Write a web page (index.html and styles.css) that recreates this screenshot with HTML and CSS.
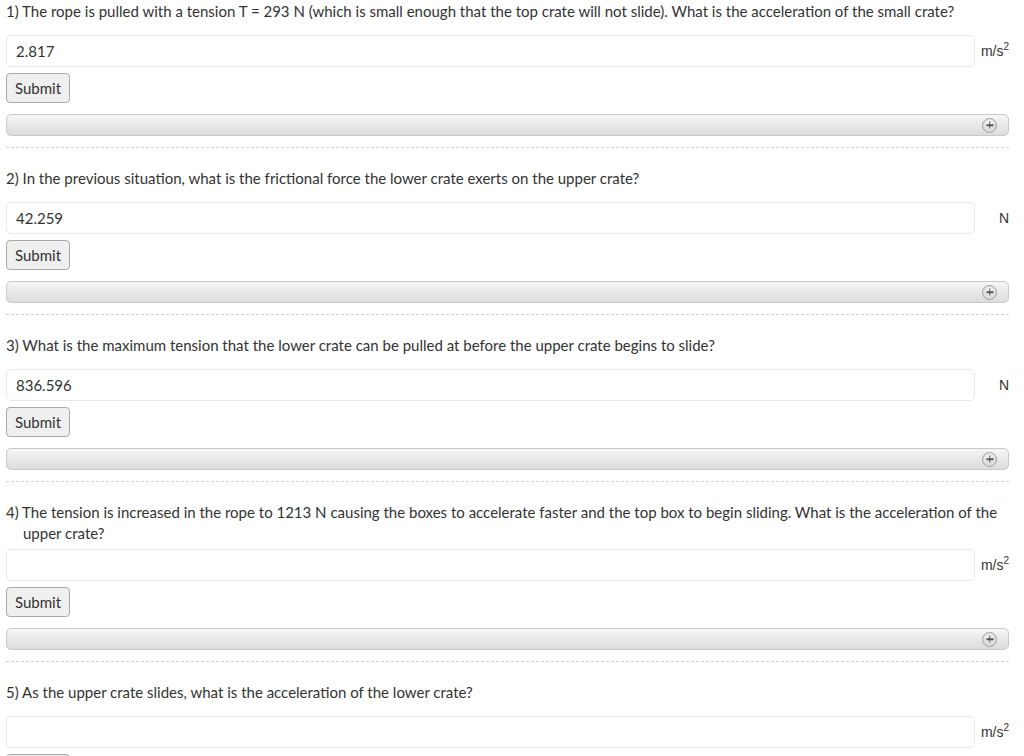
FILE: index.html
```html
<!DOCTYPE html>
<html lang="en">
<head>
<meta charset="utf-8">
<title>Questions</title>
<link rel="stylesheet" href="styles.css">
</head>
<body>
<div class="page">

  <section class="question">
    <p class="prompt">1) The rope is pulled with a tension T = 293 N (which is small enough that the top crate will not slide). What is the acceleration of the small crate?</p>
    <div class="answer-row">
      <input class="answer" type="text" value="2.817">
      <span class="unit">m/s<sup>2</sup></span>
    </div>
    <button class="submit" type="button">Submit</button>
    <div class="hint-bar"><span class="plus"></span></div>
  </section>

  <section class="question">
    <p class="prompt">2) In the previous situation, what is the frictional force the lower crate exerts on the upper crate?</p>
    <div class="answer-row">
      <input class="answer" type="text" value="42.259">
      <span class="unit">N</span>
    </div>
    <button class="submit" type="button">Submit</button>
    <div class="hint-bar"><span class="plus"></span></div>
  </section>

  <section class="question">
    <p class="prompt">3) What is the maximum tension that the lower crate can be pulled at before the upper crate begins to slide?</p>
    <div class="answer-row">
      <input class="answer" type="text" value="836.596">
      <span class="unit">N</span>
    </div>
    <button class="submit" type="button">Submit</button>
    <div class="hint-bar"><span class="plus"></span></div>
  </section>

  <section class="question">
    <p class="prompt prompt-multi">4) The tension is increased in the rope to 1213 N causing the boxes to accelerate faster and the top box to begin sliding. What is the acceleration of the upper crate?</p>
    <div class="answer-row">
      <input class="answer" type="text" value="">
      <span class="unit">m/s<sup>2</sup></span>
    </div>
    <button class="submit" type="button">Submit</button>
    <div class="hint-bar"><span class="plus"></span></div>
  </section>

  <section class="question">
    <p class="prompt">5) As the upper crate slides, what is the acceleration of the lower crate?</p>
    <div class="answer-row">
      <input class="answer" type="text" value="">
      <span class="unit">m/s<sup>2</sup></span>
    </div>
    <button class="submit" type="button">Submit</button>
    <div class="hint-bar"><span class="plus"></span></div>
  </section>

</div>
</body>
</html>
```

FILE: styles.css
```css
html, body {
  margin: 0;
  padding: 0;
  background: #fff;
}

body {
  font-family: "Lato", "Noto Sans", sans-serif;
  font-size: 15px;
  color: #333;
}

.page {
  padding: 0 15px 0 6px;
}

.question {
  padding-top: 1px;
  padding-bottom: 11px;
  border-bottom: 1px dashed #d4d4d4;
}

.question + .question {
  padding-top: 20px;
}

.prompt {
  margin: 0 0 13px 0;
  line-height: 21px;
  padding-left: 17px;
  text-indent: -17px;
}

.prompt-multi {
  margin-bottom: 5px;
}

.answer-row {
  display: flex;
  align-items: center;
  gap: 5px;
}

.answer {
  flex: 1;
  height: 32px;
  box-sizing: border-box;
  border: 1px solid #e8e8e8;
  border-radius: 5px;
  padding: 0 9px;
  font-family: "Lato", "Noto Sans", sans-serif;
  font-size: 15px;
  color: #333;
  background: #fff;
  outline: none;
}

.unit {
  width: 29px;
  text-align: right;
  font-family: "Liberation Sans", "DejaVu Sans", sans-serif;
  font-size: 14px;
  color: #333;
  white-space: nowrap;
}

.unit sup {
  font-size: 10px;
  vertical-align: 6px;
  line-height: 0;
}

.submit {
  display: block;
  margin-top: 6px;
  height: 30px;
  width: 64px;
  box-sizing: border-box;
  border: 1px solid #a9a9a9;
  border-radius: 4px;
  background: #efefef;
  font-family: "Lato", "Noto Sans", sans-serif;
  font-size: 15px;
  color: #333;
  padding: 0;
}

.hint-bar {
  margin-top: 11px;
  height: 22px;
  box-sizing: border-box;
  border: 1px solid #c9c9c9;
  border-radius: 5px;
  background: linear-gradient(#f6f6f6, #dcdcdc);
  display: flex;
  align-items: center;
  justify-content: flex-end;
  padding-right: 11px;
}

.plus {
  position: relative;
  width: 15px;
  height: 15px;
  box-sizing: border-box;
  border-radius: 50%;
  border: 1px solid #a0a0a0;
  background: radial-gradient(circle at 50% 35%, #f6f6f6, #cfcfcf);
}

.plus::before,
.plus::after {
  content: "";
  position: absolute;
  background: #555;
  left: 50%;
  top: 50%;
  transform: translate(-50%, -50%);
}

.plus::before {
  width: 7px;
  height: 1.5px;
}

.plus::after {
  width: 1.5px;
  height: 7px;
}
```
